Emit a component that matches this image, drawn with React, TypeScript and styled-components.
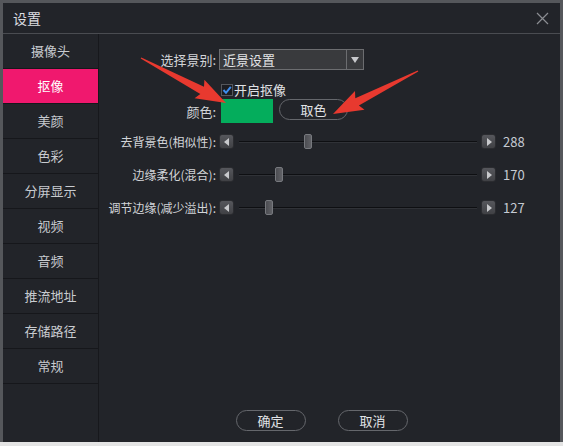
import * as React from "react";
import styled, { createGlobalStyle } from "styled-components";

const FOND = "#222429";
const TEXTE = "#d2d4d8";
const ROSE = "#f0186e";
const BORD = "#65676c";

const GlobalStyle = createGlobalStyle`
    html, body {
        margin: 0;
        padding: 0;
        background: #e4e4e4;
        font-family: "Noto Sans CJK SC", "Liberation Sans", sans-serif;
    }
`;

const Fenetre = styled.div`
    position: relative;
    box-sizing: border-box;
    width: 563px;
    height: 442px;
    background: ${FOND};
    border: 3px solid #55575b;
    border-bottom: none;
    display: flex;
    flex-direction: column;
    overflow: hidden;
`;

const BarreTitre = styled.div`
    flex: none;
    height: 30px;
    border-bottom: 1px solid #4a4c51;
    display: flex;
    align-items: center;
    justify-content: space-between;
    padding: 0 11px 0 10px;
    color: #dcdde0;
    font-size: 14px;
`;

const Corps = styled.div`
    flex: auto;
    display: flex;
    flex-direction: row;
    min-height: 0;
`;

const Menu = styled.div`
    flex: none;
    width: 95px;
    border-right: 1px solid #17181c;
    display: flex;
    flex-direction: column;
`;

const ElementMenu = styled.div<{ $actif?: boolean }>`
    box-sizing: border-box;
    height: 35px;
    padding-bottom: 2px;
    display: flex;
    align-items: center;
    justify-content: center;
    font-size: 13px;
    color: ${props => props.$actif ? "#ffffff" : "#c8cbd0"};
    background: ${props => props.$actif ? ROSE : "transparent"};
    border-bottom: 1px solid #16171b;
`;

const Contenu = styled.div`
    flex: auto;
    display: flex;
    flex-direction: column;
    padding-top: 15px;
`;

const Ligne = styled.div<{ $haut: number; $hauteur: number }>`
    display: grid;
    grid-template-columns: 117px auto;
    column-gap: 3px;
    align-items: center;
    margin-top: ${props => props.$haut}px;
    height: ${props => props.$hauteur}px;
`;

const Etiquette = styled.div<{ $petit?: boolean }>`
    text-align: right;
    white-space: nowrap;
    direction: rtl;
    unicode-bidi: plaintext;
    font-size: ${props => props.$petit ? "12px" : "13px"};
    color: ${TEXTE};
`;

const Controles = styled.div`
    display: flex;
    flex-direction: row;
    align-items: center;
`;

const Liste = styled.div`
    box-sizing: border-box;
    width: 145px;
    height: 21px;
    border: 1px solid #6c6d70;
    background: #393a3d;
    display: flex;
    align-items: stretch;
`;

const ListeTexte = styled.div`
    flex: auto;
    padding-left: 3px;
    font-size: 13px;
    line-height: 19px;
    color: #e2e3e5;
`;

const ListeFleche = styled.div`
    flex: none;
    width: 16px;
    border-left: 1px solid #6c6d70;
    display: flex;
    align-items: center;
    justify-content: center;
`;

const Case = styled.div`
    box-sizing: border-box;
    width: 12px;
    height: 12px;
    margin-left: 2px;
    background: #1c1d22;
    border: 1px solid #55575c;
    display: flex;
    align-items: center;
    justify-content: center;
`;

const TexteCase = styled.span`
    margin-left: 1px;
    font-size: 13px;
    color: #e0e1e4;
`;

const Echantillon = styled.div<{ $fond: string }>`
    width: 52px;
    height: 24px;
    margin-left: 2px;
    background: ${props => props.$fond};
`;

const BoutonRond = styled.button<{ $largeur: number }>`
    box-sizing: border-box;
    width: ${props => props.$largeur}px;
    height: 21px;
    padding: 0;
    border: 1px solid ${BORD};
    border-radius: 11px;
    background: transparent;
    color: #e0e2e6;
    font-family: inherit;
    font-size: 13px;
    line-height: 19px;
`;

const BoutonPas = styled.div`
    box-sizing: border-box;
    flex: none;
    width: 15px;
    height: 15px;
    border-radius: 3px;
    border: 1px solid #2b2c30;
    background: linear-gradient(#56575c, #404145);
    display: flex;
    align-items: center;
    justify-content: center;
`;

const Piste = styled.div`
    position: relative;
    flex: none;
    width: 238px;
    height: 16px;
    margin: 0 4px 0 5px;
`;

const PisteLigne = styled.div`
    position: absolute;
    left: 0;
    right: 0;
    top: 7px;
    height: 1px;
    background: #0e0f12;
    border-bottom: 1px solid #303237;
`;

const Curseur = styled.div`
    position: absolute;
    top: 0;
    box-sizing: border-box;
    width: 8px;
    height: 15px;
    margin-left: -4px;
    border-radius: 2px;
    border: 1px solid #77797e;
    background: linear-gradient(90deg, #4c4d52, #606166);
`;

const Valeur = styled.span`
    margin-left: 7px;
    font-size: 13px;
    color: #c6cbd3;
`;

const Pied = styled.div`
    flex: auto;
    display: flex;
    align-items: flex-end;
    justify-content: center;
    gap: 32px;
    padding: 0 16px 11px 0;
`;

const Calque = styled.svg`
    position: absolute;
    left: -3px;
    top: -3px;
    pointer-events: none;
`;

const rubriques = ["摄像头", "抠像", "美颜", "色彩", "分屏显示", "视频", "音频", "推流地址", "存储路径", "常规"];

const reglages = [
    { nom: "去背景色(相似性):", val: 288, haut: 9 },
    { nom: "边缘柔化(混合):", val: 170, haut: 17 },
    { nom: "调节边缘(减少溢出):", val: 127, haut: 17 },
];

function Triangle({ sens }: { sens: "g" | "d" | "b" }) {
    const pts = sens === "g" ? "7,2 7,10 2,6" : sens === "d" ? "3,2 3,10 8,6" : "1,3 9,3 5,9";
    return (
        <svg width="10" height="12" viewBox="0 0 10 12">
            <polygon points={pts} fill="#c8c9cc" />
        </svg>
    );
}

function Reglage({ nom, val, haut }: { nom: string; val: number; haut: number }) {
    return (
        <Ligne $haut={haut} $hauteur={16}>
            <Etiquette $petit>{nom}</Etiquette>
            <Controles>
                <BoutonPas><Triangle sens="g" /></BoutonPas>
                <Piste>
                    <PisteLigne />
                    <Curseur style={{ left: `${(val / 1000) * 238}px` }} />
                </Piste>
                <BoutonPas><Triangle sens="d" /></BoutonPas>
                <Valeur>{val}</Valeur>
            </Controles>
        </Ligne>
    );
}

// flèche rouge d'annotation, effilée de la queue à la pointe
function fleche(x1: number, y1: number, x2: number, y2: number): string {
    const dx = x2 - x1, dy = y2 - y1;
    const l = Math.sqrt(dx * dx + dy * dy);
    const ux = dx / l, uy = dy / l;
    const nx = -uy, ny = ux;
    const tete = 27;
    const bx = x2 - ux * tete, by = y2 - uy * tete;
    const p = (x: number, y: number) => `${x.toFixed(1)},${y.toFixed(1)}`;
    return [
        p(x1 + nx * 0.6, y1 + ny * 0.6),
        p(bx + nx * 4, by + ny * 4),
        p(bx + nx * 10.5 - ux * 3, by + ny * 10.5 - uy * 3),
        p(x2, y2),
        p(bx - nx * 10.5 - ux * 3, by - ny * 10.5 - uy * 3),
        p(bx - nx * 4, by - ny * 4),
        p(x1 - nx * 0.6, y1 - ny * 0.6),
    ].join(" ");
}

export default function App() {
    return (
        <>
            <GlobalStyle />
            <Fenetre>
                <BarreTitre>
                    <span>设置</span>
                    <svg width="13" height="13" viewBox="0 0 13 13">
                        <path d="M1 1 L12 12 M12 1 L1 12" stroke="#8b8d92" strokeWidth="1.2" />
                    </svg>
                </BarreTitre>
                <Corps>
                    <Menu>
                        {rubriques.map(r => <ElementMenu key={r} $actif={r === "抠像"}>{r}</ElementMenu>)}
                    </Menu>
                    <Contenu>
                        <Ligne $haut={0} $hauteur={21}>
                            <Etiquette>选择景别:</Etiquette>
                            <Controles>
                                <Liste>
                                    <ListeTexte>近景设置</ListeTexte>
                                    <ListeFleche><Triangle sens="b" /></ListeFleche>
                                </Liste>
                            </Controles>
                        </Ligne>
                        <Ligne $haut={10} $hauteur={14}>
                            <span />
                            <Controles>
                                <Case>
                                    <svg width="10" height="10" viewBox="0 0 10 10">
                                        <path d="M1.5 5 L4 7.8 L8.8 1.8" stroke="#3d8ef0" strokeWidth="2" fill="none" />
                                    </svg>
                                </Case>
                                <TexteCase>开启抠像</TexteCase>
                            </Controles>
                        </Ligne>
                        <Ligne $haut={5} $hauteur={24}>
                            <Etiquette>颜色:</Etiquette>
                            <Controles>
                                <Echantillon $fond="#04ad5c" />
                                <BoutonRond $largeur={69} style={{ marginLeft: 6, marginBottom: 3 }}>取色</BoutonRond>
                            </Controles>
                        </Ligne>
                        {reglages.map(r => <Reglage key={r.nom} {...r} />)}
                        <Pied>
                            <BoutonRond $largeur={70}>确定</BoutonRond>
                            <BoutonRond $largeur={70}>取消</BoutonRond>
                        </Pied>
                    </Contenu>
                </Corps>
                <Calque width="563" height="446">
                    <polygon points={fleche(141, 58, 226, 103)} fill="#e8392f" />
                    <polygon points={fleche(418, 71, 333, 114)} fill="#e8392f" />
                </Calque>
            </Fenetre>
        </>
    );
}
